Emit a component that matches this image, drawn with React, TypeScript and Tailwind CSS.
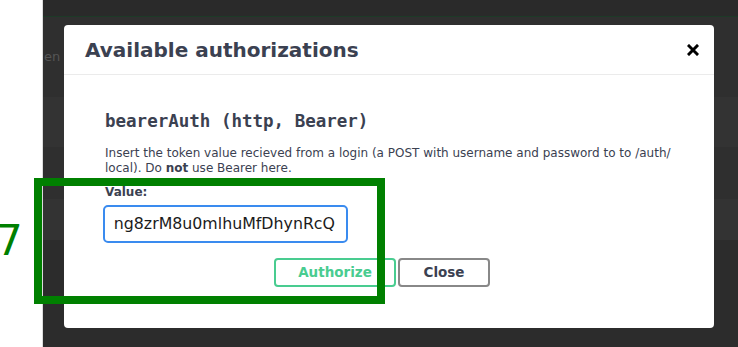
const sans = "font-['DejaVu_Sans',sans-serif]";
const mono = "font-['DejaVu_Sans_Mono',monospace]";

function CloseIcon() {
  return (
    <svg width="12" height="12" viewBox="0 0 12 12" className="block">
      <path d="M2 2 L10 10 M10 2 L2 10" stroke="#000" strokeWidth="3" strokeLinecap="square" />
    </svg>
  );
}

function AuthModal() {
  return (
    <div className={`absolute left-[21px] top-[25px] w-[650px] h-[303px] bg-white rounded-[4px] ${sans}`}>
      <div className="h-[50px] flex items-center justify-between pl-[21px] pr-[15px] border-b border-[#ebebeb]">
        <h3 className="text-[20px] leading-[24px] font-bold text-[#3b4151]">Available authorizations</h3>
        <button className="p-0">
          <CloseIcon />
        </button>
      </div>

      <div className="pl-[41px] pt-[36px]">
        <h4 className={`${mono} text-[17.5px] leading-[20px] font-bold text-[#3b4151]`}>bearerAuth (http, Bearer)</h4>
        <p className="mt-[15px] w-[590px] text-[12px] leading-[15px] text-[#3b4151]">
          Insert the token value recieved from a login (a POST with username and password to to /auth/
          <br />
          local). Do <strong>not</strong> use Bearer here.
        </p>
        <label className="block mt-[9px] text-[12px] leading-[15px] font-bold text-[#3b4151]">Value:</label>
        <div className="mt-[5px] -ml-[2px] w-[245px] h-[38px] border-2 border-[#3a8bef] rounded-[5px] flex items-center pl-[9px] pr-[11px]">
          <div className="flex-1 overflow-hidden flex justify-end whitespace-nowrap text-[15.8px] text-[#1b1b1b]">
            <span>eyJhbGciOiJIUzI1NiIsInR5cCI6IkpXVCJ9.Fq3Tn7Bng8zrM8u0mlhuMfDhynRcQ</span>
            <span className="w-px h-[18px] bg-black self-center" />
          </div>
        </div>
      </div>

      <div className="flex justify-center pr-[14px] mt-[15px]">
        <button className="w-[122px] h-[29px] mr-[2px] border-2 border-[#49cc90] rounded-[4px] text-[13.5px] font-bold text-[#49cc90]">
          Authorize
        </button>
        <button className="w-[92px] h-[29px] border-2 border-[#888888] rounded-[4px] text-[13.5px] font-bold text-[#3b4151]">
          Close
        </button>
      </div>
    </div>
  );
}

export default function App() {
  return (
    <div className={`relative w-[738px] h-[347px] overflow-hidden flex ${sans}`}>
      <div className="w-[43px] bg-white border-r border-[#dcdcdc]" />

      <div className="relative flex-1 flex flex-col">
        <div className="h-[16px] bg-[#2a2a2a]" />
        <div className="h-px bg-[#1d3a27]" />
        <div className="h-[80px] bg-[#2f2f2f] pt-[30px]">
          <span className="block ml-[1px] text-[13px] text-[#555555]">en</span>
        </div>
        <div className="h-[50px] bg-[#333333]" />
        <div className="h-[52px] bg-[#2f2f2f]" />
        <div className="h-[41px] bg-[#333333]" />
        <div className="flex-1 bg-[#2c2c2c]" />

        <AuthModal />
      </div>

      {/* annotation overlay */}
      <div className="absolute left-[34px] top-[178px] w-[351px] h-[126px] border-[8px] border-[#008000]" />
      <span className="absolute left-[-4px] top-[216px] text-[42px] leading-[50px] text-[#008000]">7</span>
    </div>
  );
}
